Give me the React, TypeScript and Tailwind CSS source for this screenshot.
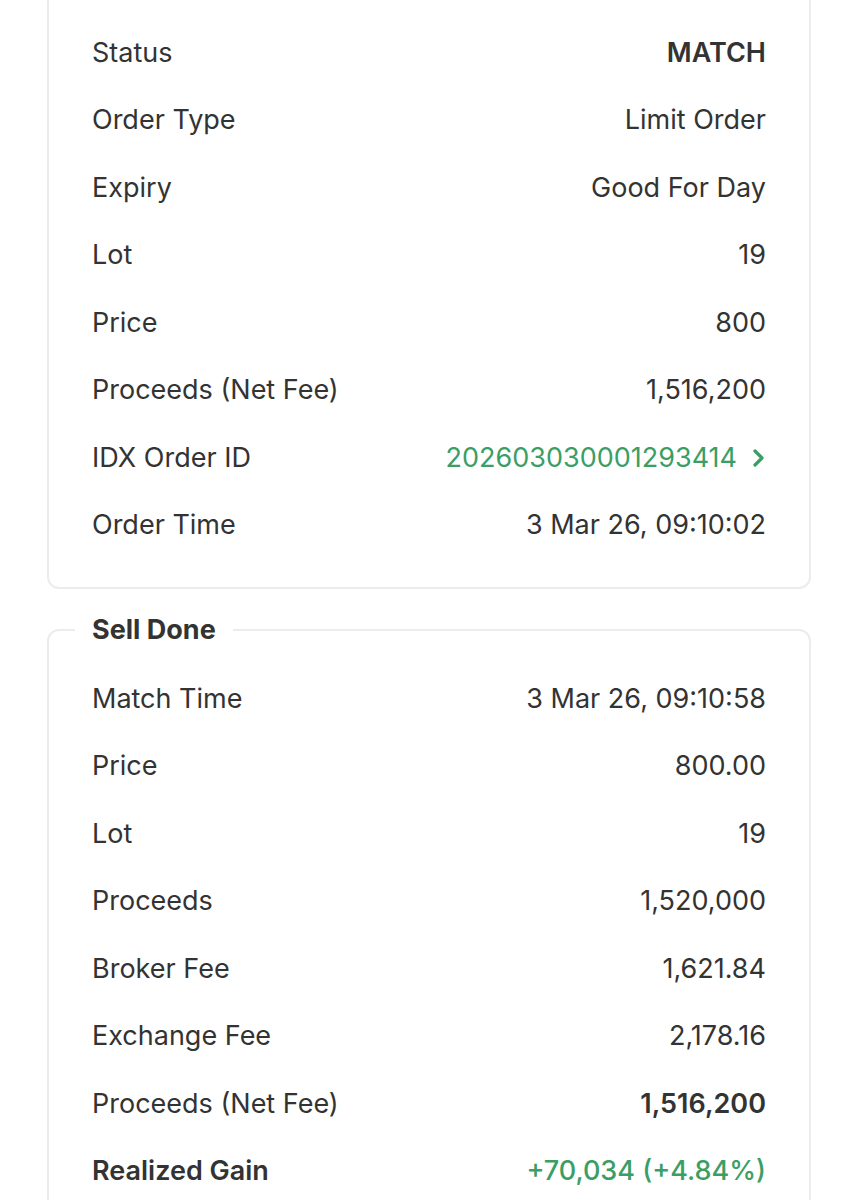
import { ReactNode } from 'react'

type Row = {
  label: string
  value: ReactNode
  bold?: boolean
  boldLabel?: boolean
  green?: boolean
}

const orderRows: Row[] = [
  { label: 'Status', value: 'MATCH', bold: true },
  { label: 'Order Type', value: 'Limit Order' },
  { label: 'Expiry', value: 'Good For Day' },
  { label: 'Lot', value: '19' },
  { label: 'Price', value: '800' },
  { label: 'Proceeds (Net Fee)', value: '1,516,200' },
  {
    label: 'IDX Order ID',
    green: true,
    value: (
      <span className="flex items-center gap-[15px]">
        20260303000129341​4
        <svg width="14" height="20" viewBox="0 0 14 20" fill="none">
          <path d="M3 3l7 7-7 7" stroke="#3b9e65" strokeWidth="3.2" strokeLinecap="round" strokeLinejoin="round" />
        </svg>
      </span>
    ),
  },
  { label: 'Order Time', value: '3 Mar 26, 09:10:02' },
]

const sellRows: Row[] = [
  { label: 'Match Time', value: '3 Mar 26, 09:10:58' },
  { label: 'Price', value: '800.00' },
  { label: 'Lot', value: '19' },
  { label: 'Proceeds', value: '1,520,000' },
  { label: 'Broker Fee', value: '1,621.84' },
  { label: 'Exchange Fee', value: '2,178.16' },
  { label: 'Proceeds (Net Fee)', value: '1,516,200', bold: true },
  { label: 'Realized Gain', value: '+70,034 (+4.84%)', boldLabel: true, green: true },
]

function DetailRow({ row }: { row: Row }) {
  const valueWeight = row.bold ? 'font-semibold' : row.green && row.boldLabel ? 'font-medium' : ''
  return (
    <div className="flex h-[67.5px] items-center justify-between">
      <span className={row.boldLabel ? 'font-semibold' : ''}>{row.label}</span>
      <span className={`${valueWeight} ${row.green ? 'text-[#3b9e65]' : ''}`}>{row.value}</span>
    </div>
  )
}

export default function App() {
  return (
    <div className="min-h-screen overflow-hidden bg-white px-[47px] text-[27px] text-[#333333] [font-family:Inter,'Open_Sans',sans-serif]">
      <div className="-mt-[16px] rounded-[12px] border-2 border-[#ececec] px-[43px] pt-[33px] pb-[28px]">
        {orderRows.map((r) => (
          <DetailRow key={r.label} row={r} />
        ))}
      </div>
      <fieldset className="mt-[24px] rounded-[12px] border-2 border-[#ececec] px-[43px] pb-[30px]">
        <legend className="-ml-[17px] px-[17px] font-bold leading-[34px]">Sell Done</legend>
        <div className="pt-[18px]">
          {sellRows.map((r) => (
            <DetailRow key={r.label} row={r} />
          ))}
        </div>
      </fieldset>
    </div>
  )
}
